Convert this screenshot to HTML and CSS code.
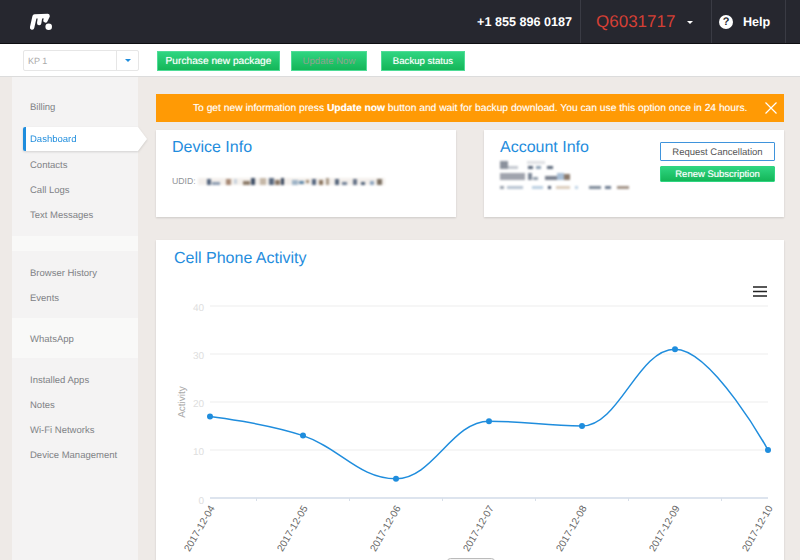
FILE: index.html
```html
<!DOCTYPE html>
<html>
	<head>
		<meta charset="utf-8" />
		<title>Dashboard</title>
		<link rel="stylesheet" href="styles.css">
	</head>
	<body>
		<div class="topbar">
			<svg class="logo" width="24" height="18" viewBox="0 0 24 18">
				<path d="M3.1 14.6 L5.6 3.4 L18.6 3 L16.4 7.4 M11.2 3.4 L10.2 10" fill="none" stroke="#fff" stroke-width="4.4" stroke-linecap="round" stroke-linejoin="round" />
				<circle cx="19.7" cy="13.7" r="3.3" fill="#fff" />
			</svg>
			<div class="top-right">
				<div class="phone">+1 855 896 0187</div>
				<div class="account-id"><span class="code">Q6031717</span><span class="caret"></span></div>
				<div class="help">
					<span class="help-icon">?</span>Help
				</div>
			</div>
		</div>
		<div class="toolbar">
			<div class="select">
				<span class="select-value">KP 1</span>
				<span class="select-arrow"><i></i></span>
			</div>
			<a class="btn btn-purchase">Purchase new package</a>
			<a class="btn btn-update">Update Now</a>
			<a class="btn btn-backup">Backup status</a>
		</div>
		<div class="main">
			<div class="sidebar">
				<ul class="nav-group first">
					<li class="billing">Billing</li>
					<li class="active">Dashboard</li>
					<li>Contacts</li>
					<li>Call Logs</li>
					<li>Text Messages</li>
				</ul>
				<div class="nav-gap"></div>
				<ul class="nav-group">
					<li>Browser History</li>
					<li>Events</li>
				</ul>
				<ul class="nav-group light">
					<li>WhatsApp</li>
				</ul>
				<ul class="nav-group last">
					<li>Installed Apps</li>
					<li>Notes</li>
					<li>Wi-Fi Networks</li>
					<li>Device Management</li>
				</ul>
			</div>
			<div class="content">
				<div class="alert">
					<p>To get new information press <b>Update now</b> button and wait for backup download. You can use this option once in 24 hours.</p>
					<svg class="alert-close" width="12" height="12" viewBox="0 0 12 12">
						<path d="M0.5 0.5 L11.5 11.5 M11.5 0.5 L0.5 11.5" stroke="#fff" stroke-width="1.2" />
					</svg>
				</div>
				<div class="info-row">
					<div class="card device-card">
						<h2>Device Info</h2>
						<div class="udid">
							<span>UDID:</span>
							<svg class="blur" width="187" height="9" viewBox="0 0 187 9">
								<rect x="0" y="1" width="187" height="7" fill="#efe9e4" opacity=".7" />
								<rect x="9" y="2" width="4" height="6" fill="#55667f" />
								<rect x="14" y="5" width="8" height="3" fill="#8c9bb0" />
								<rect x="28" y="2" width="5" height="6" fill="#a88a76" />
								<rect x="36" y="2" width="3" height="5" fill="#c9d3dd" />
								<rect x="45" y="4" width="7" height="4" fill="#8d7c6a" />
								<rect x="53" y="1" width="4" height="7" fill="#3f4f66" />
								<rect x="62" y="1" width="6" height="7" fill="#c6b8a8" />
								<rect x="71" y="1" width="5" height="7" fill="#5b6a80" />
								<rect x="77" y="3" width="5" height="5" fill="#8a7766" />
								<rect x="83" y="1" width="3" height="7" fill="#364459" />
								<rect x="94" y="3" width="6" height="5" fill="#9fb4c7" />
								<rect x="101" y="4" width="5" height="3" fill="#5f87a8" />
								<rect x="108" y="3" width="3" height="3" fill="#a08a72" />
								<rect x="114" y="2" width="4" height="6" fill="#55667f" />
								<rect x="121" y="3" width="4" height="5" fill="#8c7660" />
								<rect x="128" y="1" width="3" height="7" fill="#a99a88" />
								<rect x="137" y="2" width="4" height="6" fill="#56667c" />
								<rect x="144" y="5" width="5" height="3" fill="#6f7f95" />
								<rect x="155" y="2" width="4" height="6" fill="#667388" />
								<rect x="163" y="5" width="4" height="3" fill="#4f6078" />
								<rect x="172" y="4" width="4" height="4" fill="#8fa6c0" />
								<rect x="179" y="2" width="5" height="6" fill="#7e7264" />
							</svg>
						</div>
					</div>
					<div class="card account-card">
						<div class="account-left">
							<h2>Account Info</h2>
							<svg class="blur" width="130" height="32" viewBox="0 0 130 32">
								<rect x="0" y="0" width="8" height="8" fill="#8b919c" />
								<rect x="8" y="5" width="10" height="3" fill="#c4c9d0" />
								<rect x="27" y="0" width="18" height="3" fill="#dfe1e4" />
								<rect x="28" y="5" width="5" height="3" fill="#566478" />
								<rect x="36" y="5" width="5" height="3" fill="#8ea2b5" />
								<rect x="47" y="5" width="6" height="3" fill="#5d6a7c" />
								<rect x="0" y="12" width="25" height="7" fill="#a0a4ad" />
								<rect x="28" y="12" width="4" height="7" fill="#7c8797" />
								<rect x="33" y="16" width="5" height="3" fill="#94a0ae" />
								<rect x="45" y="15" width="12" height="4" fill="#7b8290" />
								<rect x="57" y="12" width="7" height="7" fill="#a9bfd6" />
								<rect x="64" y="13" width="6" height="6" fill="#8c7a6c" />
								<rect x="0" y="25" width="4" height="3" fill="#9aa3af" />
								<rect x="7" y="25" width="16" height="3" fill="#b8c4d2" />
								<rect x="32" y="25" width="11" height="3" fill="#bcd0e2" />
								<rect x="48" y="25" width="3" height="3" fill="#4a5870" />
								<rect x="56" y="25" width="14" height="3" fill="#dccdbd" />
								<rect x="75" y="25" width="3" height="3" fill="#bfd3e6" />
								<rect x="89" y="25" width="12" height="3" fill="#7e8a99" />
								<rect x="105" y="25" width="6" height="3" fill="#6c7b90" />
								<rect x="117" y="25" width="12" height="3" fill="#a39488" />
							</svg>
						</div>
						<div class="account-actions">
							<a class="btn-outline">Request Cancellation</a>
							<a class="btn btn-renew">Renew Subscription</a>
						</div>
					</div>
				</div>
				<div class="card activity-card">
					<h2>Cell Phone Activity</h2>
					<svg class="chart" width="628" height="287" viewBox="156 273 628 287">
						<g class="grid">
							<path d="M210 306 H768 M210 354 H768 M210 402 H768 M210 450 H768" />
						</g>
						<path class="axis" d="M210 498 H768" />
						<path class="ticks" d="M256.5 498 V501 M349.5 498 V501 M442.5 498 V501 M535.5 498 V501 M628.5 498 V501 M721.5 498 V501" />
						<g class="y-labels">
							<text x="204" y="311">40</text>
							<text x="204" y="359">30</text>
							<text x="204" y="407">20</text>
							<text x="204" y="455">10</text>
							<text x="204" y="504">0</text>
						</g>
						<text class="y-title" transform="translate(185 402) rotate(-90)">Activity</text>
						<path class="line" d="M210 416.4 C210 416.4 265.8 423.12 303 435.6 C340.2 448.08 358.8 478.8 396 478.8 C433.2 478.8 451.8 421.2 489 421.2 C526.2 421.2 544.8 426 582 426 C619.2 426 637.8 349.2 675 349.2 C712.2 349.2 768 450 768 450" />
						<g class="dots">
							<circle cx="210" cy="416.4" r="3" />
							<circle cx="303" cy="435.6" r="3" />
							<circle cx="396" cy="478.8" r="3" />
							<circle cx="489" cy="421.2" r="3" />
							<circle cx="582" cy="426" r="3" />
							<circle cx="675" cy="349.2" r="3" />
							<circle cx="768" cy="450" r="3" />
						</g>
						<g class="x-labels">
							<text transform="translate(215 508) rotate(-60)">2017-12-04</text>
							<text transform="translate(308 508) rotate(-60)">2017-12-05</text>
							<text transform="translate(401 508) rotate(-60)">2017-12-06</text>
							<text transform="translate(494 508) rotate(-60)">2017-12-07</text>
							<text transform="translate(587 508) rotate(-60)">2017-12-08</text>
							<text transform="translate(680 508) rotate(-60)">2017-12-09</text>
							<text transform="translate(773 508) rotate(-60)">2017-12-10</text>
						</g>
						<path class="burger" d="M753 287 H767 M753 291.5 H767 M753 296 H767" />
						<rect class="scroll-tab" x="447.5" y="558.5" width="47" height="10" rx="3" />
					</svg>
				</div>
			</div>
		</div>
	</body>
</html>
```
FILE: styles.css
```css
* {
	box-sizing: border-box;
}
html, body {
	height: 100%;
}
body {
	margin: 0;
	padding: 0;
	display: flex;
	flex-direction: column;
	overflow: hidden;
	font-family: "Liberation Sans", Arial, sans-serif;
	text-rendering: geometricPrecision;
	background-color: #eeeae7;
}
ul {
	list-style: none;
	padding: 0;
	margin: 0;
}
h2 {
	margin: 0;
	font-size: 16px;
	line-height: 18px;
	font-weight: normal;
	color: #1f8ddd;
}
p {
	margin: 0;
}

/* top bar */
.topbar {
	flex: none;
	display: flex;
	justify-content: space-between;
	align-items: center;
	height: 44px;
	padding-left: 29px;
	background-color: #26272f;
	border-bottom: 1px solid #0e0e12;
}
.logo {
	display: block;
	margin-top: 1px;
}
.top-right {
	display: flex;
	align-self: stretch;
	color: #fff;
}
.phone {
	display: flex;
	align-items: center;
	padding-right: 8px;
	font-size: 12.6px;
	font-weight: bold;
}
.account-id {
	display: flex;
	align-items: center;
	width: 131px;
	padding-left: 15px;
	border-left: 1px solid #3a3b44;
}
.code {
	font-size: 17px;
	color: #d43f35;
}
.caret {
	margin-left: 12px;
	margin-top: 2px;
	border-top: 3px solid #fff;
	border-left: 3px solid transparent;
	border-right: 3px solid transparent;
}
.help {
	display: flex;
	align-items: center;
	width: 75px;
	margin-right: 14px;
	padding-left: 7px;
	font-size: 12.6px;
	font-weight: bold;
	border-left: 1px solid #3a3b44;
	border-right: 1px solid #3a3b44;
}
.help-icon {
	display: block;
	width: 14px;
	height: 14px;
	margin-right: 10px;
	border-radius: 50%;
	font-size: 11px;
	line-height: 14px;
	text-align: center;
	color: #26272f;
	background-color: #fff;
}

/* toolbar */
.toolbar {
	flex: none;
	display: flex;
	align-items: flex-end;
	height: 33px;
	padding: 0 0 5px 23px;
	background-color: #fff;
	border-bottom: 1px solid #dcdcdc;
}
.select {
	display: flex;
	width: 116px;
	height: 21px;
	margin-right: 18px;
	font-size: 9px;
	line-height: 20px;
	color: #aaa;
	border: 1px solid #e6e6e6;
	border-radius: 2px;
}
.select-value {
	flex: 1;
	padding-left: 4px;
}
.select-arrow {
	display: flex;
	align-items: center;
	justify-content: center;
	width: 22px;
	border-left: 1px solid #e6e6e6;
}
.select-arrow i {
	border-top: 3px solid #1f8ddd;
	border-left: 3px solid transparent;
	border-right: 3px solid transparent;
}
.btn {
	display: block;
	height: 20px;
	font-size: 9.6px;
	line-height: 20px;
	text-align: center;
	color: #fff;
	text-shadow: 0 0 1px rgba(255, 255, 255, .5);
	border: 1px solid #4fdc97;
	background: linear-gradient(#2fd581, #14b658);
}
.btn-purchase {
	width: 123px;
	margin-right: 11px;
	font-size: 10.2px;
}
.btn-update {
	width: 76px;
	margin-right: 14px;
	color: #8fa38f;
	text-shadow: none;
}
.btn-backup {
	width: 84px;
}

/* layout */
.main {
	flex: 1;
	display: flex;
	min-height: 0;
}
.sidebar {
	flex: none;
	display: flex;
	flex-direction: column;
	width: 126px;
	margin-left: 12px;
	font-size: 9.5px;
	color: #808286;
	background-color: #f4f3f3;
}
.content {
	flex: 1;
	min-width: 0;
	padding: 17px 16px 0 18px;
}

/* sidebar */
.nav-group {
	padding: 9px 0 8px;
}
.nav-group li {
	height: 25px;
	padding-left: 18px;
	line-height: 27px;
}
.nav-group.first {
	padding: 17px 0 9px;
}
.nav-group.light {
	padding: 8px 0 7px;
	background-color: #f9f9f8;
}
.nav-group.last {
	flex: 1;
}
.nav-gap {
	height: 15px;
	background-color: #f9f9f8;
}
.nav-group .billing {
	margin-bottom: 8px;
}
.nav-group .active {
	position: relative;
	height: 24px;
	margin-bottom: 1px;
	margin-left: 11px;
	padding-left: 4px;
	line-height: 26px;
	color: #1f8ddd;
	background-color: #fff;
	border-left: 3px solid #1f8ddd;
	border-radius: 2px 0 0 2px;
	filter: drop-shadow(0 1px 1px rgba(0, 0, 0, .14));
}
.nav-group .active:after {
	content: "";
	position: absolute;
	top: 0;
	left: 100%;
	border-top: 12px solid transparent;
	border-bottom: 12px solid transparent;
	border-left: 9px solid #fff;
}

/* alert */
.alert {
	display: flex;
	align-items: center;
	height: 28px;
	padding: 0 7px 0 37px;
	font-size: 10.26px;
	color: #fff;
	background-color: #ff9a05;
}
.alert p {
	flex: 1;
	white-space: nowrap;
	text-shadow: 0 0 1px rgba(255, 255, 255, .4);
}
.alert-close {
	display: block;
}

/* cards */
.card {
	background-color: #fff;
	box-shadow: 0 1px 2px rgba(0, 0, 0, .14);
}
.info-row {
	display: flex;
	justify-content: space-between;
	margin-top: 8px;
}
.device-card, .account-card {
	width: 300px;
	height: 87px;
}
.device-card {
	padding: 9px 16px;
}
.udid {
	display: flex;
	align-items: center;
	margin-top: 19px;
	font-size: 8.7px;
	color: #8f9296;
}
.udid span {
	flex: none;
	width: 26px;
}
.blur {
	display: block;
	filter: blur(.8px);
}
.account-card {
	display: flex;
	justify-content: space-between;
	padding: 9px 9px 0 16px;
}
.account-left svg {
	margin-top: 4px;
}
.account-actions {
	width: 115px;
	padding-top: 3px;
}
.btn-outline {
	display: block;
	height: 19px;
	font-size: 9.5px;
	line-height: 19px;
	text-align: center;
	color: #555;
	border: 1px solid #3f94dc;
	border-radius: 1px;
}
.btn-renew {
	height: 16px;
	margin-top: 5px;
	font-size: 9.5px;
	line-height: 16px;
	border-color: #2fd581;
	border-radius: 1px;
}
.activity-card {
	margin-top: 23px;
	height: 320px;
	overflow: hidden;
}
.activity-card h2 {
	height: 33px;
	padding: 10px 0 0 18px;
}
.chart {
	display: block;
	font-family: "Liberation Sans", Arial, sans-serif;
}

/* chart */
.grid path {
	fill: none;
	stroke: #f3f3f3;
	stroke-width: 1.5;
}
.axis {
	fill: none;
	stroke: #dde4ee;
	stroke-width: 2;
}
.ticks {
	fill: none;
	stroke: #d8dfe9;
	stroke-width: 1;
}
.y-labels text {
	font-size: 10px;
	fill: #dedede;
	text-anchor: end;
}
.y-title {
	font-size: 10px;
	fill: #aaa;
	text-anchor: middle;
}
.line {
	fill: none;
	stroke: #1f8ddd;
	stroke-width: 1.5;
}
.dots circle {
	fill: #1f8ddd;
}
.x-labels text {
	font-size: 10px;
	fill: #666;
	text-anchor: end;
}
.burger {
	fill: none;
	stroke: #222;
	stroke-width: 1.5;
}
.scroll-tab {
	fill: #f4f4f4;
	stroke: #bbb;
}
```
